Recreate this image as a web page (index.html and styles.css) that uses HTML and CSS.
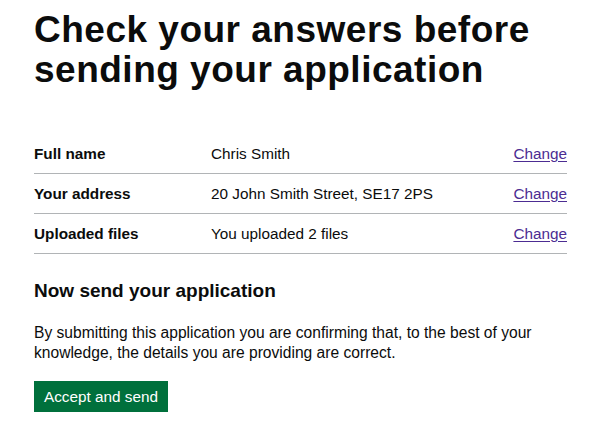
FILE: index.html
```html
<!DOCTYPE html>
<html lang="en">
<head>
<meta charset="utf-8">
<title>Check your answers</title>
<link rel="stylesheet" href="styles.css">
</head>
<body>
<main class="page">
  <h1 class="title">Check your answers before sending your application</h1>
  <dl class="summary">
    <div class="row">
      <dt class="key">Full name</dt>
      <dd class="value">Chris Smith</dd>
      <dd class="action"><a class="link" href="#">Change</a></dd>
    </div>
    <div class="row">
      <dt class="key">Your address</dt>
      <dd class="value">20 John Smith Street, SE17 2PS</dd>
      <dd class="action"><a class="link" href="#">Change</a></dd>
    </div>
    <div class="row">
      <dt class="key">Uploaded files</dt>
      <dd class="value">You uploaded 2 files</dd>
      <dd class="action"><a class="link" href="#">Change</a></dd>
    </div>
  </dl>
  <h2 class="subtitle">Now send your application</h2>
  <p class="body">By submitting this application you are confirming that, to the best of your knowledge, the details you are providing are correct.</p>
  <button class="button" type="submit">Accept and send</button>
</main>
</body>
</html>
```
FILE: styles.css
```css
* { box-sizing: border-box; }
html, body { margin: 0; padding: 0; background: #ffffff; }
body {
  font-family: "Liberation Sans", Arial, sans-serif;
  color: #0b0c0c;
}
.page {
  width: 533px;
  margin: 0 0 0 34px;
  padding-top: 10px;
  display: flex;
  flex-direction: column;
  align-items: flex-start;
}
.title {
  margin: 0 0 45px;
  font-size: 37px;
  line-height: 40px;
  font-weight: 700;
  letter-spacing: 0.5px;
}
.summary {
  margin: 0;
  width: 100%;
}
.row {
  display: grid;
  grid-template-columns: 177px 1fr auto;
  padding: 9px 0 10px;
  border-bottom: 1px solid #b1b4b6;
  font-size: 15.3px;
  line-height: 19px;
}
.row + .row { padding-top: 10px; }
.key { margin: 0; font-weight: 700; }
.value { margin: 0; }
.action { margin: 0; text-align: right; }
.link { color: #4c2c92; text-decoration: underline; text-underline-offset: 2px; }
.subtitle {
  margin: 25px 0 20px;
  font-size: 19px;
  line-height: 24px;
  font-weight: 700;
}
.body {
  margin: 0 0 18px;
  font-size: 15.6px;
  line-height: 20px;
}
.button {
  font-family: inherit;
  font-size: 15.3px;
  line-height: 19px;
  color: #ffffff;
  background: #00703c;
  border: 0;
  border-radius: 0;
  padding: 6px 10px;
  box-shadow: 0 2px 0 #002d18;
  cursor: pointer;
}
```
